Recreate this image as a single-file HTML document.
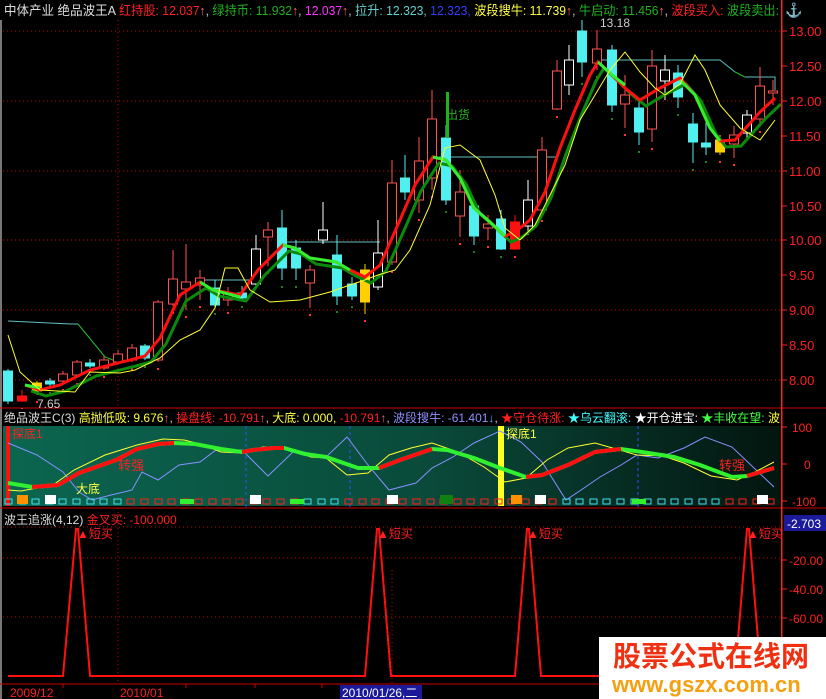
<!DOCTYPE html><html><head><meta charset="utf-8"><style>
html,body{margin:0;padding:0;background:#000;width:826px;height:699px;overflow:hidden}
svg{display:block}
text{font-family:"Liberation Sans","Noto Sans CJK SC",sans-serif}
</style></head><body>
<svg id="s" width="826" height="699" xmlns="http://www.w3.org/2000/svg">
<defs><linearGradient id="g" x1="0" x2="1" y1="0" y2="0"><stop offset="0" stop-color="#0b6650"/><stop offset="0.55" stop-color="#0a4a3a"/><stop offset="1" stop-color="#03150f"/></linearGradient></defs>
<rect x="0" y="0" width="826" height="699" fill="#000"/>
<rect x="0" y="0" width="2" height="699" fill="#777"/>
<rect x="3" y="426" width="778" height="80" fill="url(#g)"/>
<g id="dyn"></g>
<!-- header -->
<rect x="0" y="0" width="781" height="20" fill="#000"/>
<text x="4" y="15" font-size="13" fill="#ddd" textLength="112" lengthAdjust="spacingAndGlyphs">中体产业  绝品波王A</text>
<text x="119" y="15" font-size="13" textLength="660" lengthAdjust="spacingAndGlyphs"><tspan fill="#ff2020">红持股: 12.037</tspan><tspan fill="#ff6060">↑</tspan><tspan fill="#ccc">,</tspan><tspan fill="#20b020"> 绿持币: 11.932</tspan><tspan fill="#ff6060">↑</tspan><tspan fill="#ccc">,</tspan><tspan fill="#ff30ff"> 12.037</tspan><tspan fill="#ff6060">↑</tspan><tspan fill="#ccc">,</tspan><tspan fill="#60d0d0"> 拉升: 12.323,</tspan><tspan fill="#3040ff"> 12.323,</tspan><tspan fill="#ffff40"> 波段搜牛: 11.739</tspan><tspan fill="#ff6060">↑</tspan><tspan fill="#ccc">,</tspan><tspan fill="#20b020"> 牛启动: 11.456</tspan><tspan fill="#ff6060">↑</tspan><tspan fill="#ccc">,</tspan><tspan fill="#ff2020"> 波段买入:</tspan><tspan fill="#20b020"> 波段卖出:</tspan></text>
<text x="785" y="15" font-size="14" fill="#ff2020" font-weight="bold">⚓</text>
<text x="600" y="27" font-size="12" fill="#ccc">13.18</text>
<text x="37" y="408" font-size="12" fill="#ccc">7.65</text>
<text x="446" y="119" font-size="12" fill="#20b020">出货</text>
<!-- indicator header -->
<rect x="3" y="409" width="778" height="17" fill="#000"/>
<text x="4" y="422" font-size="12" textLength="776" lengthAdjust="spacingAndGlyphs"><tspan fill="#ddd">绝品波王C(3)</tspan><tspan fill="#ffff40"> 高抛低吸: 9.676</tspan><tspan fill="#ff6060">↑</tspan><tspan fill="#ccc">,</tspan><tspan fill="#ff2020"> 操盘线: -10.791</tspan><tspan fill="#ff6060">↑</tspan><tspan fill="#ccc">,</tspan><tspan fill="#ffff40"> 大底: 0.000,</tspan><tspan fill="#ff2020"> -10.791</tspan><tspan fill="#ff6060">↑</tspan><tspan fill="#ccc">,</tspan><tspan fill="#9090ff"> 波段搜牛: -61.401</tspan><tspan fill="#60a0ff">↓</tspan><tspan fill="#ccc">,</tspan><tspan fill="#ff2020"> ★守仓待涨:</tspan><tspan fill="#40ffff"> ★乌云翻滚:</tspan><tspan fill="#fff"> ★开仓进宝:</tspan><tspan fill="#40ff40"> ★丰收在望:</tspan><tspan fill="#ffff40"> 波</tspan></text>
<text x="12" y="438" font-size="12" fill="#ff2020">探底1</text>
<text x="506" y="438" font-size="12" fill="#ffff40">探底1</text>
<text x="118" y="470" font-size="13" fill="#ff2020">转强</text>
<text x="719" y="470" font-size="13" fill="#ff2020">转强</text>
<text x="76" y="493" font-size="12" fill="#ffff40">大底</text>
<!-- lower -->
<text x="4" y="524" font-size="12"><tspan fill="#ddd">波王追涨(4,12)</tspan><tspan fill="#ff2020">  金叉买: -100.000</tspan></text>
<rect x="340" y="685" width="82" height="14" fill="#1a1a9a"/>
<text x="10" y="697" font-size="12" fill="#ff2020">2009/12</text>
<text x="120" y="697" font-size="12" fill="#ff2020">2010/01</text>
<text x="342" y="697" font-size="12" fill="#fff">2010/01/26,二</text>
<!-- right axis -->
<rect x="781" y="0" width="1.5" height="699" fill="#ff2020"/>
<rect x="784" y="515" width="42" height="16" fill="#1a1a9a"/>
<text x="787" y="528" font-size="12" fill="#fff">-2.703</text>
<!-- watermark -->
<rect x="599" y="637" width="227" height="62" fill="#fff"/>
<text x="613" y="666" font-size="28" font-weight="bold" fill="#f03010" font-family="Noto Sans CJK SC,sans-serif">股票公式在线网</text>
<text x="612" y="692" font-size="22" font-weight="bold" fill="#f5a010">www.gszx.com.cn</text>
</svg>
<script>
var d=document.getElementById('dyn'),h='';
function line(pts,c,w,extra){h+='<polyline points="'+pts.map(function(a){return a[0]+','+a[1]}).join(' ')+'" fill="none" stroke="'+c+'" stroke-width="'+w+'" '+(extra||'')+'/>';}
[31,101,171,240,310,380].forEach(function(y){h+='<line x1="3" x2="781" y1="'+y+'" y2="'+y+'" stroke="#c00" stroke-dasharray="1,3"/>';});
h+='<line x1="118" x2="118" y1="0" y2="408" stroke="#c00" stroke-dasharray="1,3"/>';
h+='<line x1="118" x2="118" y1="508" y2="684" stroke="#c00" stroke-dasharray="1,3"/>';
h+='<line x1="392" x2="392" y1="570" y2="684" stroke="#c00" stroke-dasharray="1,3"/>';
[527,558,617].forEach(function(y){h+='<line x1="3" x2="781" y1="'+y+'" y2="'+y+'" stroke="#c00" stroke-dasharray="1,3"/>';});
h+='<line x1="0" x2="826" y1="408" y2="408" stroke="#c00"/>';
h+='<line x1="0" x2="826" y1="508" y2="508" stroke="#c00"/>';
h+='<line x1="0" x2="781" y1="684" y2="684" stroke="#c00"/>';
line([[8,321],[70,324],[78,324]],'#60c0c0',1);line([[78,324],[105,357],[118,362]],'#20c020',1);
line([[200,280],[255,280]],'#60c0c0',1);line([[283,242],[380,242]],'#60c0c0',1);
line([[432,157],[556,157]],'#60c0c0',1);line([[597,60],[720,60],[735,72]],'#60c0c0',1);line([[735,72],[745,77]],'#20c020',1);line([[745,77],[775,77],[775,90]],'#60c0c0',1);
var C=[[8,371,401,369,404,'c'],[22,396,401,390,402,'R'],[37,383,391,381,395,'y'],[50,381,384,378,386,'c'],[63,374,381,371,383,'r'],[77,362,375,360,377,'r'],[90,363,366,359,368,'c'],[104,360,368,356,370,'r'],[118,354,362,350,364,'r'],[132,348,360,344,362,'r'],[145,346,358,344,360,'c'],[158,302,360,300,362,'r'],[173,279,304,250,306,'r'],[186,282,289,244,310,'r'],[200,278,285,270,300,'r'],[215,288,305,280,307,'c'],[228,294,300,287,306,'r'],[242,293,298,286,300,'c'],[256,249,284,235,287,'w'],[268,230,237,222,266,'r'],[282,228,268,210,280,'c'],[296,248,268,240,280,'c'],[310,270,283,265,308,'r'],[323,230,240,202,244,'w'],[337,255,296,235,305,'c'],[352,284,296,277,300,'c'],[365,270,302,264,314,'y'],[378,253,287,220,290,'w'],[392,183,262,160,265,'r'],[405,178,192,155,200,'c'],[419,161,200,137,213,'r'],[432,119,178,90,190,'r'],[446,138,200,125,205,'c'],[460,192,216,170,237,'r'],[474,206,236,200,245,'c'],[488,224,228,215,240,'r'],[501,219,249,210,250,'c'],[515,222,249,215,250,'R'],[528,200,226,180,235,'w'],[542,150,210,137,214,'r'],[557,71,109,60,110,'r'],[569,60,85,45,95,'w'],[582,31,62,20,77,'c'],[597,49,63,30,70,'r'],[612,50,105,45,112,'c'],[625,95,104,75,128,'r'],[639,108,132,100,145,'c'],[652,66,129,50,142,'r'],[665,70,81,55,100,'w'],[678,73,97,65,108,'c'],[693,124,142,113,163,'c'],[706,143,147,119,155,'c'],[720,140,152,135,155,'y'],[734,135,144,126,158,'r'],[747,115,133,110,140,'w'],[760,86,119,67,125,'r'],[773,91,93,80,105,'r']];
C.forEach(function(c){var x=c[0],col={c:'#50f0f0',r:'#ff5050',w:'#fff',y:'#ffd000',R:'#ff1010'}[c[5]];
h+='<line x1="'+x+'" x2="'+x+'" y1="'+c[3]+'" y2="'+c[4]+'" stroke="'+col+'"/>';
var fill=(c[5]=='c'||c[5]=='y'||c[5]=='R')?col:'#000';
h+='<rect x="'+(x-4.5)+'" y="'+c[1]+'" width="9" height="'+Math.max(2,c[2]-c[1])+'" fill="'+fill+'" stroke="'+col+'"/>';
if(c[5]!='w'){h+='<rect x="'+(x-1)+'" y="'+(c[4]+6)+'" width="2" height="2" fill="'+(c[5]=='c'?'#208020':'#ff3030')+'"/>';}});
h+='<rect x="446" y="92" width="3" height="46" fill="#20b020"/>';
var R=[[25,385],[40,390],[60,385],[90,370],[130,360],[145,356],[160,338],[180,295],[200,282],[213,290],[240,295],[258,270],[283,245],[295,248],[310,258],[336,262],[350,270],[365,277],[380,265],[400,220],[415,185],[433,157],[446,160],[460,178],[474,208],[490,222],[505,236],[515,232],[530,220],[545,192],[560,148],[575,110],[590,75],[598,62],[612,75],[625,88],[640,100],[660,88],[680,78],[695,95],[710,128],[720,141],[735,140],[760,112],[775,98]];
var G=R.map(function(p){return [p[0]+6,p[1]+6]});
line(G,'#0a8a0a',3);line(R,'#ff1010',3);
line([[200,282],[213,290],[240,297]],'#30f030',3);line([[283,245],[295,248],[310,258],[336,262],[350,270]],'#30f030',3);
line([[433,157],[446,160],[460,178],[474,208],[490,222],[505,236]],'#30f030',3);line([[598,62],[612,75],[625,85]],'#30f030',3);line([[680,80],[695,95],[710,128],[720,141]],'#30f030',3);
line([[25,385],[40,388]],'#30f030',3);
var Y=[[8,335],[20,372],[40,390],[75,392],[90,372],[120,373],[135,370],[160,358],[180,340],[200,330],[215,308],[225,268],[238,268],[250,290],[270,302],[300,300],[330,292],[350,285],[362,281],[378,275],[395,270],[410,250],[430,205],[445,148],[460,145],[480,160],[495,195],[505,228],[520,240],[535,225],[550,195],[565,165],[580,120],[595,95],[610,70],[625,52],[640,72],[655,88],[665,95],[680,84],[695,55],[705,70],[720,105],[740,128],[760,140],[775,120]];
line(Y,'#ffff30',1);
[[13,31],[12.5,66],[12,101],[11.5,136],[11,171],[10.5,206],[10,240],[9.5,275],[9,310],[8.5,345],[8,380]].forEach(function(a){h+='<line x1="781" x2="787" y1="'+a[1]+'" y2="'+a[1]+'" stroke="#ff2020"/><text x="789" y="'+(a[1]+5)+'" font-size="13" fill="#ff2020">'+a[0].toFixed(2)+'</text>';});
[[100,427],[0,464],[-100,501]].forEach(function(a){h+='<line x1="781" x2="787" y1="'+a[1]+'" y2="'+a[1]+'" stroke="#ff2020"/><text x="'+(a[0]==0?804:792)+'" y="'+(a[1]+5)+'" font-size="12" fill="#ff2020">'+a[0]+'</text>';});
[[-20,560],[-40,589],[-60,618],[-80,648]].forEach(function(a){h+='<line x1="781" x2="787" y1="'+a[1]+'" y2="'+a[1]+'" stroke="#ff2020"/><text x="789" y="'+(a[1]+5)+'" font-size="12" fill="#ff2020">'+a[0].toFixed(2)+'</text>';});
[246,350,638].forEach(function(x){h+='<line x1="'+x+'" x2="'+x+'" y1="426" y2="508" stroke="#3050ff" stroke-dasharray="3,3"/>';});
h+='<rect x="6" y="426" width="4" height="80" fill="#ff1010"/><rect x="498" y="426" width="6" height="80" fill="#ffff20"/>';
line([[8,443],[37,455],[63,472],[79,492],[92,500],[111,495],[132,490],[142,472],[158,480],[179,465],[200,462],[216,450],[242,450],[268,476],[295,450],[326,457],[347,437],[368,465],[389,490],[416,483],[432,468],[453,457],[474,443],[500,431],[521,442],[542,462],[566,500],[584,488],[600,477],[621,465],[637,455],[658,458],[684,448],[705,437],[732,447],[753,467],[774,487]],'#8890ff',1);
line([[8,490],[21,491],[53,485],[74,470],[105,455],[137,445],[163,439],[184,440],[200,444],[221,452],[242,453],[263,447],[284,448],[311,457],[326,458],[347,475],[368,473],[389,455],[411,448],[432,443],[458,452],[484,467],[505,482],[526,478],[547,460],[568,448],[595,443],[616,449],[637,455],[663,456],[684,463],[711,476],[737,480],[753,473],[774,462]],'#ffff30',1);
var T=[[8,483],[32,487],[58,485],[79,473],[116,460],[137,449],[158,444],[174,443],[195,444],[221,449],[242,452],[253,450],[274,448],[284,448],[305,454],[326,457],[358,468],[379,468],[400,460],[432,449],[447,450],[474,458],[500,468],[526,477],[542,475],[568,465],[595,452],[621,449],[642,452],[674,457],[700,465],[732,477],[747,476],[774,468]];
line(T,'#30f030',4);
function seg(a,b){line(T.filter(function(p){return p[0]>=a&&p[0]<=b}),'#ff1010',4);}
seg(32,174);seg(242,284);seg(379,432);seg(526,621);seg(747,774);
for(var x=8;x<775;x+=13.6){var xi=Math.round(x);var col=(xi<120||(xi>300&&xi<340)||(xi>560&&xi<720))?'#40e0f0':'#ff2020';h+='<rect x="'+(xi-3)+'" y="499" width="7" height="5" fill="none" stroke="'+col+'"/>';}
[[22,'#ff9000'],[50,'#fff'],[255,'#fff'],[392,'#fff'],[516,'#ff9000'],[540,'#fff'],[762,'#fff']].forEach(function(a){h+='<rect x="'+(a[0]-5)+'" y="495" width="11" height="9" fill="'+a[1]+'"/>';});
h+='<rect x="180" y="499" width="14" height="5" fill="#30f030"/><rect x="290" y="499" width="14" height="5" fill="#30f030"/><rect x="440" y="495" width="13" height="9" fill="#108010"/><rect x="632" y="499" width="14" height="5" fill="#30f030"/>';
var L=[[8,676]];[[63,77,90],[365,378,391],[515,528,541],[735,748,761]].forEach(function(p){L.push([p[0],676],[p[1]-1,529],[p[1]+1,529],[p[2],676]);});L.push([780,676]);
line(L,'#ff1010',2);
[80,380,530,750].forEach(function(x){h+='<text x="'+(x-3)+'" y="538" font-size="12" fill="#ff2020">▲短买</text>';});
[63,186,255,322].forEach(function(x){h+='<line x1="'+x+'" x2="'+x+'" y1="684" y2="688" stroke="#c00"/>';});
d.innerHTML=h;
</script>
</body></html>
